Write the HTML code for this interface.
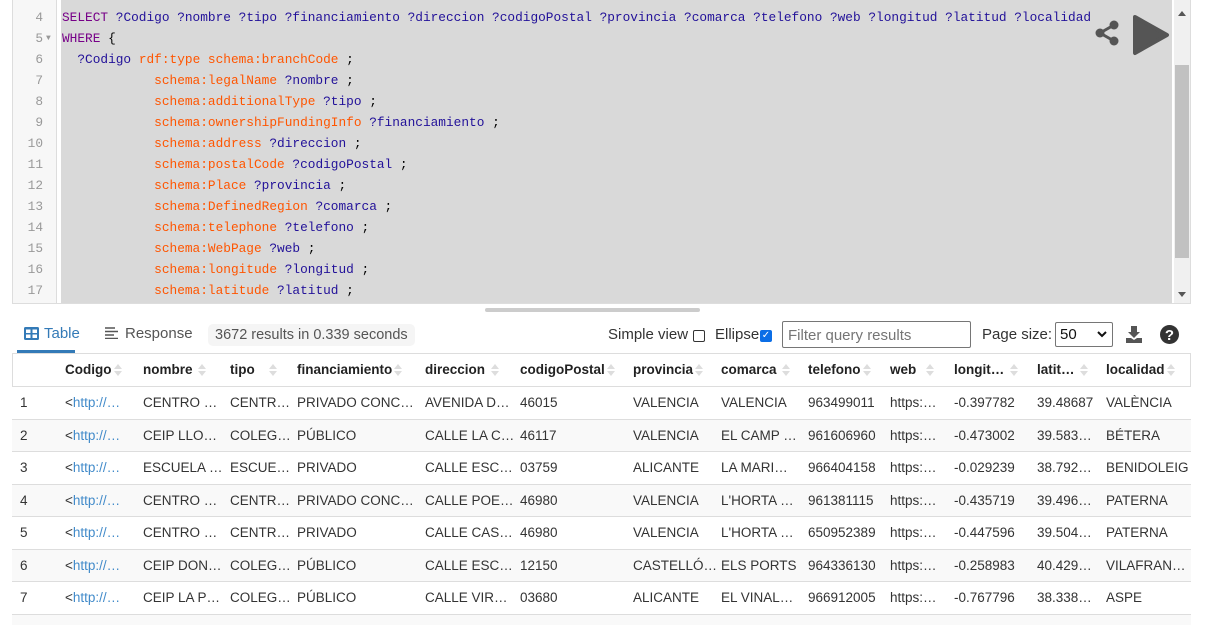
<!DOCTYPE html>
<html><head><meta charset="utf-8"><style>
*{margin:0;padding:0;box-sizing:border-box}
body{width:1205px;height:620px;overflow:hidden;background:#fff;font-family:"Liberation Sans",sans-serif;position:relative}
.ed{position:absolute;left:12px;top:-2px;width:1179px;height:306px;border:1px solid #ddd;border-top:none;background:#fff;overflow:hidden}
.gut{position:absolute;left:0;top:0;width:44px;height:100%;background:#f7f7f7;border-right:1px solid #ddd}
.code{position:absolute;left:48px;top:0;width:1111px;height:100%;background:#d9d9d9}
.ln{position:absolute;left:0;width:30px;text-align:right;font:12.8px "Liberation Mono",monospace;color:#999;line-height:21px}
.cl{position:absolute;left:49px;font:12.8px "Liberation Mono",monospace;line-height:21px;white-space:pre;color:#000}
.k{color:#708}.v{color:#05a}.o{color:#f50}.vv{color:#219}
.sb{position:absolute;left:1161px;top:0;width:17px;height:100%;background:#f0f0f0}
.th{position:absolute;left:1px;top:67px;width:14px;height:193px;background:#c1c1c1}
.t{position:absolute;font-size:14px;white-space:nowrap}
.hd{font-weight:bold;color:#222;font-size:13.5px}
.row{position:absolute;left:12px;width:1179px;border-bottom:1px solid #ddd}
.c{position:absolute;top:0;font-size:13.5px;color:#333;white-space:nowrap}
a{color:#428bca;text-decoration:none}
.ar{display:inline-block;width:8px;height:14px;vertical-align:middle;margin-left:2px;position:relative}
.ar:before{content:"";position:absolute;left:0;top:1px;border:4px solid transparent;border-bottom:5px solid #ddd;border-top:none}
.ar:after{content:"";position:absolute;left:0;top:8px;border:4px solid transparent;border-top:5px solid #ddd;border-bottom:none}
</style></head><body>
<div class="ed">
<div class="gut"></div><div class="code"></div>
<div class="ln" style="top:9px">4</div>
<div class="ln" style="top:30px">5<span style="font-size:8px;position:absolute;left:33px">▼</span></div>
<div class="ln" style="top:51px">6</div><div class="ln" style="top:72px">7</div><div class="ln" style="top:93px">8</div><div class="ln" style="top:114px">9</div><div class="ln" style="top:135px">10</div><div class="ln" style="top:156px">11</div><div class="ln" style="top:177px">12</div><div class="ln" style="top:198px">13</div><div class="ln" style="top:219px">14</div><div class="ln" style="top:240px">15</div><div class="ln" style="top:261px">16</div><div class="ln" style="top:282px">17</div>
<div class="cl" style="top:9px"><span class="k">SELECT</span> <span class="vv">?Codigo ?nombre ?tipo ?financiamiento ?direccion ?codigoPostal ?provincia ?comarca ?telefono ?web ?longitud ?latitud ?localidad</span></div>
<div class="cl" style="top:30px"><span class="k">WHERE</span> {</div>
<div class="cl" style="top:51px">  <span class="vv">?Codigo</span> <span class="o">rdf:type schema:branchCode</span> ;</div>
<div class="cl" style="top:72px">            <span class="o">schema:legalName</span> <span class="vv">?nombre</span> ;</div>
<div class="cl" style="top:93px">            <span class="o">schema:additionalType</span> <span class="vv">?tipo</span> ;</div>
<div class="cl" style="top:114px">            <span class="o">schema:ownershipFundingInfo</span> <span class="vv">?financiamiento</span> ;</div>
<div class="cl" style="top:135px">            <span class="o">schema:address</span> <span class="vv">?direccion</span> ;</div>
<div class="cl" style="top:156px">            <span class="o">schema:postalCode</span> <span class="vv">?codigoPostal</span> ;</div>
<div class="cl" style="top:177px">            <span class="o">schema:Place</span> <span class="vv">?provincia</span> ;</div>
<div class="cl" style="top:198px">            <span class="o">schema:DefinedRegion</span> <span class="vv">?comarca</span> ;</div>
<div class="cl" style="top:219px">            <span class="o">schema:telephone</span> <span class="vv">?telefono</span> ;</div>
<div class="cl" style="top:240px">            <span class="o">schema:WebPage</span> <span class="vv">?web</span> ;</div>
<div class="cl" style="top:261px">            <span class="o">schema:longitude</span> <span class="vv">?longitud</span> ;</div>
<div class="cl" style="top:282px">            <span class="o">schema:latitude</span> <span class="vv">?latitud</span> ;</div>
<div class="sb"><div style="position:absolute;left:4px;top:13px;border:4px solid transparent;border-bottom:5px solid #555;border-top:none"></div><div class="th"></div><div style="position:absolute;left:4px;top:294px;border:4px solid transparent;border-top:5px solid #555;border-bottom:none"></div></div>
<svg style="position:absolute;left:1082px;top:22px" width="26" height="26" viewBox="0 0 26 26"><circle cx="5" cy="13" r="4.5" fill="#555"/><circle cx="19" cy="5" r="4.5" fill="#555"/><circle cx="19" cy="21" r="4.5" fill="#555"/><path d="M5 13L19 5M5 13L19 21" stroke="#555" stroke-width="3"/></svg>
<svg style="position:absolute;left:1119px;top:16px" width="38" height="42" viewBox="0 0 38 42"><path d="M3 3L35 21L3 39Z" fill="#555" stroke="#555" stroke-width="4" stroke-linejoin="round"/></svg>
</div>
<div style="position:absolute;left:485px;top:308px;width:215px;height:4px;background:#ccc;border-radius:2px"></div>
<svg style="position:absolute;left:24px;top:327px" width="15" height="13" viewBox="0 0 15 13"><rect x="0" y="0" width="15" height="13" rx="1.5" fill="#337ab7"/><rect x="2" y="2.5" width="4.5" height="3.5" fill="#fff"/><rect x="8.5" y="2.5" width="4.5" height="3.5" fill="#fff"/><rect x="2" y="7.5" width="4.5" height="3.5" fill="#fff"/><rect x="8.5" y="7.5" width="4.5" height="3.5" fill="#fff"/></svg>
<div class="t" style="left:44px;top:325px;font-size:15px;color:#337ab7">Table</div>
<div style="position:absolute;left:17px;top:350px;width:58px;height:3px;background:#337ab7"></div>
<svg style="position:absolute;left:105px;top:327px" width="13" height="12" viewBox="0 0 13 12"><path d="M0 1H10M0 4.5H13M0 8H9M0 11.5H13" stroke="#555" stroke-width="1.5"/></svg>
<div class="t" style="left:125px;top:325px;font-size:15px;color:#555">Response</div>
<div class="t" style="left:208px;top:324px;height:22px;padding:3px 7px;background:#f5f5f5;border-radius:5px;color:#555;font-size:14.5px">3672 results in 0.339 seconds</div>
<div class="t" style="left:608px;top:326px;font-size:15px;color:#333">Simple view</div>
<div style="position:absolute;left:693px;top:330px;width:12px;height:12px;border:1px solid #333;border-radius:2px"></div>
<div class="t" style="left:715px;top:326px;font-size:15px;color:#333">Ellipse</div>
<div style="position:absolute;left:760px;top:330px;width:12px;height:12px;background:#0b6ee6;border-radius:2px;color:#fff;font-size:10px;line-height:12px;text-align:center">✓</div>
<div style="position:absolute;left:782px;top:321px;width:189px;height:27px;border:1px solid #767676;border-radius:2px"></div>
<div class="t" style="left:788px;top:327px;font-size:15px;color:#757575">Filter query results</div>
<div class="t" style="left:982px;top:326px;font-size:15px;color:#333">Page size:</div>
<div style="position:absolute;left:1055px;top:322px;width:58px;height:25px;border:1px solid #767676;border-radius:2px"></div>
<div class="t" style="left:1060px;top:326px;font-size:15px;color:#111">50</div>
<svg style="position:absolute;left:1097px;top:331px" width="10" height="7" viewBox="0 0 10 7"><path d="M1 1L5 5L9 1" stroke="#111" stroke-width="2" fill="none"/></svg>
<svg style="position:absolute;left:1126px;top:326px" width="16" height="17" viewBox="0 0 16 17"><path d="M5 0H11V6H14L8 12L2 6H5Z" fill="#555"/><path d="M0 12H5L8 14L11 12H16V17H0Z" fill="#555"/></svg>
<svg style="position:absolute;left:1160px;top:325px" width="19" height="19" viewBox="0 0 19 19"><circle cx="9.5" cy="9.5" r="9.5" fill="#333"/><text x="9.5" y="15" text-anchor="middle" font-family="Liberation Sans" font-weight="bold" font-size="15" fill="#fff">?</text></svg>
<div style="position:absolute;left:12px;top:353px;width:1179px;height:267px;border:1px solid #ddd;border-bottom:none"></div>
<div class="row" style="top:353px;height:34px;border-top:1px solid #ddd"></div>
<div class="t hd" style="top:362px;left:65px">Codigo<span class="ar"></span></div>
<div class="t hd" style="top:362px;left:143px">nombre <span class="ar"></span></div>
<div class="t hd" style="top:362px;left:230px">tipo <span class="ar" style="margin-left:10px"></span></div>
<div class="t hd" style="top:362px;left:297px">financiamiento<span class="ar"></span></div>
<div class="t hd" style="top:362px;left:425px">direccion <span class="ar"></span></div>
<div class="t hd" style="top:362px;left:520px">codigoPostal<span class="ar"></span></div>
<div class="t hd" style="top:362px;left:633px">provincia<span class="ar"></span></div>
<div class="t hd" style="top:362px;left:721px">comarca <span class="ar"></span></div>
<div class="t hd" style="top:362px;left:808px">telefono<span class="ar"></span></div>
<div class="t hd" style="top:362px;left:890px">web <span class="ar" style="margin-left:6px"></span></div>
<div class="t hd" style="top:362px;left:954px">longit… <span class="ar"></span></div>
<div class="t hd" style="top:362px;left:1037px">latit… <span class="ar"></span></div>
<div class="t hd" style="top:362px;left:1106px">localidad<span class="ar"></span></div>

<div class="row" style="top:387px;height:32.5px;background:#fff"><div class="c" style="left:8px;top:8px">1</div><div class="c" style="left:53px;top:8px">&lt;<a>http://…</a></div><div class="c" style="left:131px;top:8px">CENTRO …</div><div class="c" style="left:218px;top:8px">CENTR…</div><div class="c" style="left:285px;top:8px">PRIVADO CONC…</div><div class="c" style="left:413px;top:8px">AVENIDA D…</div><div class="c" style="left:508px;top:8px">46015</div><div class="c" style="left:621px;top:8px">VALENCIA</div><div class="c" style="left:709px;top:8px">VALENCIA</div><div class="c" style="left:796px;top:8px">963499011</div><div class="c" style="left:878px;top:8px">https:…</div><div class="c" style="left:942px;top:8px">-0.397782</div><div class="c" style="left:1025px;top:8px">39.48687</div><div class="c" style="left:1094px;top:8px">VALÈNCIA</div></div>
<div class="row" style="top:419.5px;height:32.5px;background:#f9f9f9"><div class="c" style="left:8px;top:8px">2</div><div class="c" style="left:53px;top:8px">&lt;<a>http://…</a></div><div class="c" style="left:131px;top:8px">CEIP LLO…</div><div class="c" style="left:218px;top:8px">COLEG…</div><div class="c" style="left:285px;top:8px">PÚBLICO</div><div class="c" style="left:413px;top:8px">CALLE LA C…</div><div class="c" style="left:508px;top:8px">46117</div><div class="c" style="left:621px;top:8px">VALENCIA</div><div class="c" style="left:709px;top:8px">EL CAMP …</div><div class="c" style="left:796px;top:8px">961606960</div><div class="c" style="left:878px;top:8px">https:…</div><div class="c" style="left:942px;top:8px">-0.473002</div><div class="c" style="left:1025px;top:8px">39.583…</div><div class="c" style="left:1094px;top:8px">BÉTERA</div></div>
<div class="row" style="top:452px;height:32.5px;background:#fff"><div class="c" style="left:8px;top:8px">3</div><div class="c" style="left:53px;top:8px">&lt;<a>http://…</a></div><div class="c" style="left:131px;top:8px">ESCUELA …</div><div class="c" style="left:218px;top:8px">ESCUE…</div><div class="c" style="left:285px;top:8px">PRIVADO</div><div class="c" style="left:413px;top:8px">CALLE ESC…</div><div class="c" style="left:508px;top:8px">03759</div><div class="c" style="left:621px;top:8px">ALICANTE</div><div class="c" style="left:709px;top:8px">LA MARI…</div><div class="c" style="left:796px;top:8px">966404158</div><div class="c" style="left:878px;top:8px">https:…</div><div class="c" style="left:942px;top:8px">-0.029239</div><div class="c" style="left:1025px;top:8px">38.792…</div><div class="c" style="left:1094px;top:8px">BENIDOLEIG</div></div>
<div class="row" style="top:484.5px;height:32.5px;background:#f9f9f9"><div class="c" style="left:8px;top:8px">4</div><div class="c" style="left:53px;top:8px">&lt;<a>http://…</a></div><div class="c" style="left:131px;top:8px">CENTRO …</div><div class="c" style="left:218px;top:8px">CENTR…</div><div class="c" style="left:285px;top:8px">PRIVADO CONC…</div><div class="c" style="left:413px;top:8px">CALLE POE…</div><div class="c" style="left:508px;top:8px">46980</div><div class="c" style="left:621px;top:8px">VALENCIA</div><div class="c" style="left:709px;top:8px">L'HORTA …</div><div class="c" style="left:796px;top:8px">961381115</div><div class="c" style="left:878px;top:8px">https:…</div><div class="c" style="left:942px;top:8px">-0.435719</div><div class="c" style="left:1025px;top:8px">39.496…</div><div class="c" style="left:1094px;top:8px">PATERNA</div></div>
<div class="row" style="top:517px;height:32.5px;background:#fff"><div class="c" style="left:8px;top:8px">5</div><div class="c" style="left:53px;top:8px">&lt;<a>http://…</a></div><div class="c" style="left:131px;top:8px">CENTRO …</div><div class="c" style="left:218px;top:8px">CENTR…</div><div class="c" style="left:285px;top:8px">PRIVADO</div><div class="c" style="left:413px;top:8px">CALLE CAS…</div><div class="c" style="left:508px;top:8px">46980</div><div class="c" style="left:621px;top:8px">VALENCIA</div><div class="c" style="left:709px;top:8px">L'HORTA …</div><div class="c" style="left:796px;top:8px">650952389</div><div class="c" style="left:878px;top:8px">https:…</div><div class="c" style="left:942px;top:8px">-0.447596</div><div class="c" style="left:1025px;top:8px">39.504…</div><div class="c" style="left:1094px;top:8px">PATERNA</div></div>
<div class="row" style="top:549.5px;height:32.5px;background:#f9f9f9"><div class="c" style="left:8px;top:8px">6</div><div class="c" style="left:53px;top:8px">&lt;<a>http://…</a></div><div class="c" style="left:131px;top:8px">CEIP DON…</div><div class="c" style="left:218px;top:8px">COLEG…</div><div class="c" style="left:285px;top:8px">PÚBLICO</div><div class="c" style="left:413px;top:8px">CALLE ESC…</div><div class="c" style="left:508px;top:8px">12150</div><div class="c" style="left:621px;top:8px">CASTELLÓ…</div><div class="c" style="left:709px;top:8px">ELS PORTS</div><div class="c" style="left:796px;top:8px">964336130</div><div class="c" style="left:878px;top:8px">https:…</div><div class="c" style="left:942px;top:8px">-0.258983</div><div class="c" style="left:1025px;top:8px">40.429…</div><div class="c" style="left:1094px;top:8px">VILAFRAN…</div></div>
<div class="row" style="top:582px;height:32.5px;background:#fff"><div class="c" style="left:8px;top:8px">7</div><div class="c" style="left:53px;top:8px">&lt;<a>http://…</a></div><div class="c" style="left:131px;top:8px">CEIP LA P…</div><div class="c" style="left:218px;top:8px">COLEG…</div><div class="c" style="left:285px;top:8px">PÚBLICO</div><div class="c" style="left:413px;top:8px">CALLE VIR…</div><div class="c" style="left:508px;top:8px">03680</div><div class="c" style="left:621px;top:8px">ALICANTE</div><div class="c" style="left:709px;top:8px">EL VINAL…</div><div class="c" style="left:796px;top:8px">966912005</div><div class="c" style="left:878px;top:8px">https:…</div><div class="c" style="left:942px;top:8px">-0.767796</div><div class="c" style="left:1025px;top:8px">38.338…</div><div class="c" style="left:1094px;top:8px">ASPE</div></div>
<div class="row" style="top:614.5px;height:10px;background:#f9f9f9;border:none"></div>
</body></html>
